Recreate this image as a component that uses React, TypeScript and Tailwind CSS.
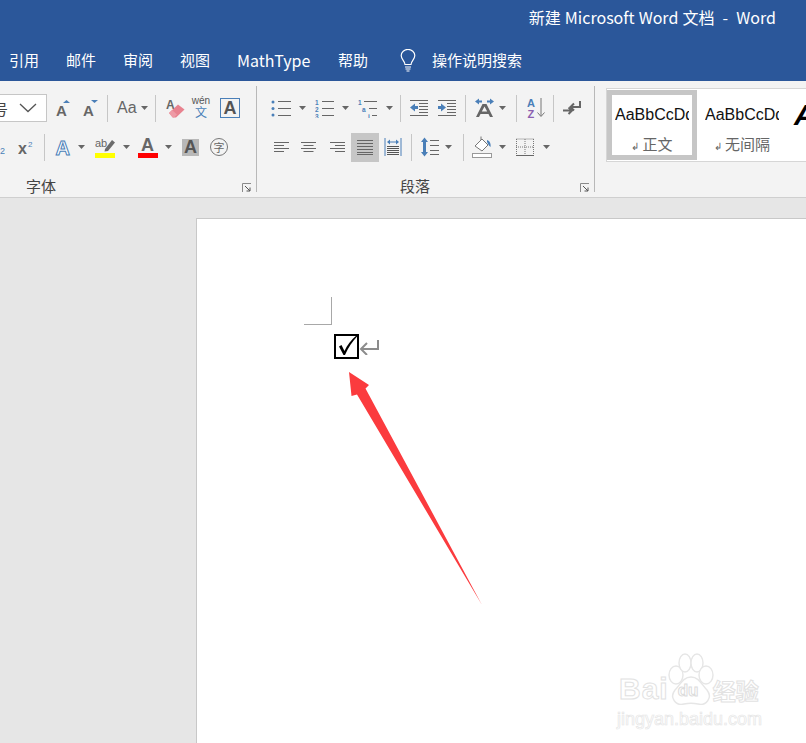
import React from "react";

const FONT = { fontFamily: '"Noto Sans CJK SC", "Liberation Sans", sans-serif' };
const LATIN = { fontFamily: '"Liberation Sans", sans-serif' };

const BLUE = "#4a7fb8";
const GRAY = "#666666";

function Dd({ className = "" }: { className?: string }) {
  return (
    <svg width="7" height="4" viewBox="0 0 7 4" className={`shrink-0 ${className}`}>
      <path d="M0 0H7L3.5 4Z" fill="#666" />
    </svg>
  );
}

function Sep({ className = "" }: { className?: string }) {
  return <div className={`w-px h-[27px] bg-[#c6c6c6] shrink-0 ${className}`} />;
}

function Ico({
  w,
  h = 20,
  className = "",
  children,
}: {
  w: number;
  h?: number;
  className?: string;
  children: React.ReactNode;
}) {
  return (
    <svg width={w} height={h} viewBox={`0 0 ${w} ${h}`} className={`shrink-0 ${className}`}>
      {children}
    </svg>
  );
}

function BigA({ x = 0, y = 17, size = 18, fill = GRAY, bold = true }: { x?: number; y?: number; size?: number; fill?: string; bold?: boolean }) {
  return (
    <text x={x} y={y} fontSize={size} fontWeight={bold ? 700 : 400} fill={fill} fontFamily="Liberation Sans">
      A
    </text>
  );
}

function Lines({ x, ys, w, color = GRAY }: { x: number; ys: number[]; w: number; color?: string }) {
  return (
    <>
      {ys.map((y) => (
        <rect key={y} x={x} y={y} width={w} height={1} fill={color} />
      ))}
    </>
  );
}

function Align({ mode, className = "" }: { mode: "l" | "c" | "r"; className?: string }) {
  const rows = [15, 10, 15, 10];
  return (
    <Ico w={15} h={12} className={className}>
      {rows.map((w, i) => (
        <rect
          key={i}
          x={mode === "l" ? 0 : mode === "c" ? (15 - w) / 2 : 15 - w}
          y={1 + i * 3}
          width={w}
          height={1}
          fill={GRAY}
        />
      ))}
    </Ico>
  );
}

function Launcher({ className = "" }: { className?: string }) {
  return (
    <svg width="9" height="9" viewBox="0 0 9 9" className={`shrink-0 ${className}`}>
      <path d="M0.5 9V0.5H9" stroke="#8a8a8a" fill="none" />
      <path d="M3 3L8 8M8 4.5V8H4.5" stroke="#555" fill="none" />
    </svg>
  );
}

function FontGroup() {
  return (
    <div className="w-[257px] shrink-0 border-r border-[#b8b8b8] h-[106px] mt-[5px] flex flex-col relative">
      <div className="h-[28px] mt-[8px] flex items-center">
        <div className="w-[47px] h-[28px] bg-white border border-[#c6c6c6] border-l-0 flex items-center overflow-hidden shrink-0">
          <span className="text-[15px] text-[#444] -ml-[7px] leading-none w-[25px]">号</span>
          <svg width="18" height="10" viewBox="0 0 18 10" className="ml-[1px]">
            <path d="M1 1L9 8.5L17 1" stroke="#555" strokeWidth="1.3" fill="none" />
          </svg>
        </div>
        <Ico w={18} className="ml-[7px]">
          <BigA x={2} y={18} size={15} />
          <path d="M9 5H16L12.5 2Z" fill={BLUE} />
        </Ico>
        <Ico w={18} className="ml-[8px]">
          <BigA x={3} y={18} size={15} />
          <path d="M11 2H18L14.5 5Z" fill={BLUE} />
        </Ico>
        <Sep className="ml-[9px]" />
        <span className="ml-[9px] text-[16px] text-[#666] leading-none w-[21px] overflow-visible" style={LATIN}>
          Aa
        </span>
        <Dd className="ml-[3px]" />
        <Sep className="ml-[7px]" />
        <Ico w={20} h={21} className="ml-[9px]">
          <text x="1" y="11" fontSize="12" fill={GRAY} fontFamily="Liberation Sans" fontWeight="700">A</text>
          <path d="M4 15L13 6.5L19.5 11.5L11 19.5H8Z" fill="#e8828f" />
          <path d="M4 15L7 12L12 16.5L9 19.5H7.5Z" fill="#ee9aa5" />
        </Ico>
        <div className="ml-[7px] w-[18px] h-[24px] flex flex-col items-center shrink-0 leading-none">
          <span className="text-[10px] text-[#555] leading-[11px] -mt-[1px]" style={LATIN}>wén</span>
          <span className="text-[12px] text-[#4a7fb8] leading-[12px]">文</span>
        </div>
        <div className="ml-[10px] w-[20px] h-[20px] border border-[#4a7fb8] flex items-center justify-center shrink-0">
          <span className="text-[18px] font-bold text-[#555] leading-none" style={LATIN}>A</span>
        </div>
      </div>
      <div className="h-[30px] mt-[10px] flex items-center">
        <span className="text-[9px] text-[#4a7fb8] w-[5px] mt-[9px] overflow-hidden leading-none" style={LATIN}>2</span>
        <Ico w={17} h={18} className="ml-[13px]">
          <text x="0" y="16" fontSize="16" fontWeight="700" fill={GRAY} fontFamily="Liberation Sans">x</text>
          <text x="10" y="9" fontSize="8" fill={BLUE} fontFamily="Liberation Sans">2</text>
        </Ico>
        <Sep className="ml-[9px]" />
        <Ico w={18} h={21} className="ml-[10px]">
          <text x="0.5" y="18" fontSize="20" fontWeight="700" fill="#fff" stroke={BLUE} strokeWidth="1" fontFamily="Liberation Sans">A</text>
        </Ico>
        <Dd className="ml-[5px]" />
        <div className="ml-[10px] w-[20px] h-[22px] flex flex-col shrink-0">
          <Ico w={20} h={17}>
            <text x="0" y="11" fontSize="11" fill={GRAY} fontFamily="Liberation Sans">ab</text>
            <path d="M10 13L17 4L20 6.5L13 15L9.5 15.5Z" fill="#6b6b6b" />
          </Ico>
          <div className="h-[5px] bg-[#ffff00]" />
        </div>
        <Dd className="ml-[8px]" />
        <div className="ml-[8px] w-[20px] h-[22px] flex flex-col items-center shrink-0">
          <Ico w={20} h={17}>
            <text x="3" y="15" fontSize="18" fontWeight="700" fill={GRAY} fontFamily="Liberation Sans">A</text>
          </Ico>
          <div className="h-[5px] w-full bg-[#ff0000]" />
        </div>
        <Dd className="ml-[7px]" />
        <div className="ml-[10px] w-[17px] h-[17px] bg-[#b8b8b8] flex items-center justify-center shrink-0">
          <span className="text-[18px] font-bold text-[#555] leading-none" style={LATIN}>A</span>
        </div>
        <div className="ml-[11px] w-[18px] h-[18px] rounded-full border border-[#777] flex items-center justify-center shrink-0">
          <span className="text-[11px] text-[#666] leading-none">字</span>
        </div>
      </div>
      <span className="absolute left-[26px] top-[92px] text-[15px] leading-[16px] text-[#444]">字体</span>
      <Launcher className="absolute left-[242px] top-[97px]" />
    </div>
  );
}

function ParaGroup() {
  return (
    <div className="w-[338px] shrink-0 border-r border-[#b8b8b8] h-[106px] mt-[5px] flex flex-col relative">
      <div className="h-[28px] mt-[8px] flex items-center pl-[14px]">
        <Ico w={20} h={20}>
          <circle cx="2" cy="4" r="1.5" fill={BLUE} />
          <circle cx="2" cy="10.5" r="1.5" fill={BLUE} />
          <circle cx="2" cy="17" r="1.5" fill={BLUE} />
          <Lines x={7} ys={[3, 10, 17]} w={13} />
        </Ico>
        <Dd className="ml-[8px]" />
        <Ico w={19} h={20} className="ml-[9px]">
          <text x="0" y="7" fontSize="6.5" fontWeight="700" fill={BLUE} fontFamily="Liberation Sans">1</text>
          <text x="0" y="14" fontSize="6.5" fontWeight="700" fill={BLUE} fontFamily="Liberation Sans">2</text>
          <text x="0" y="21" fontSize="6.5" fontWeight="700" fill={BLUE} fontFamily="Liberation Sans">3</text>
          <Lines x={7} ys={[3, 10, 17]} w={12} />
        </Ico>
        <Dd className="ml-[8px]" />
        <Ico w={19} h={20} className="ml-[9px]">
          <text x="0" y="7" fontSize="6.5" fontWeight="700" fill={BLUE} fontFamily="Liberation Sans">1</text>
          <text x="4" y="14" fontSize="6.5" fontWeight="700" fill={BLUE} fontFamily="Liberation Sans">a</text>
          <text x="10" y="21" fontSize="6.5" fontWeight="700" fill={BLUE} fontFamily="Liberation Sans">i</text>
          <Lines x={6} ys={[3]} w={13} />
          <Lines x={11} ys={[10]} w={8} />
          <Lines x={14} ys={[17]} w={5} />
        </Ico>
        <Dd className="ml-[9px]" />
        <Sep className="ml-[7px]" />
        <Ico w={18} h={18} className="ml-[9px]">
          <Lines x={0} ys={[1, 16]} w={18} />
          <Lines x={9} ys={[4, 7, 10, 13]} w={9} />
          <path d="M0 8.5L5 4.5V7H8V10H5V12.5Z" fill={BLUE} />
        </Ico>
        <Ico w={18} h={18} className="ml-[10px]">
          <Lines x={0} ys={[1, 16]} w={18} />
          <Lines x={9} ys={[4, 7, 10, 13]} w={9} />
          <path d="M8 8.5L3 4.5V7H0V10H3V12.5Z" fill={BLUE} />
        </Ico>
        <Sep className="ml-[9px]" />
        <Ico w={19} h={20} className="ml-[9px]">
          <path d="M0 3.5L4 0.5V2.5H7V4.5H4V6.5ZM19 3.5L15 0.5V2.5H12V4.5H15V6.5Z" fill={BLUE} />
          <path d="M1 19L7.5 6H11.5L18 19H15L13.5 16H5.5L4 19ZM6.8 13.5H12.2L9.5 8.5Z" fill={GRAY} />
        </Ico>
        <Dd className="ml-[5px]" />
        <Sep className="ml-[10px]" />
        <Ico w={18} h={22} className="ml-[10px]">
          <text x="0" y="10" fontSize="11" fontWeight="700" fill={BLUE} fontFamily="Liberation Sans">A</text>
          <text x="0.5" y="21" fontSize="11" fontWeight="700" fill="#8b5fb0" fontFamily="Liberation Sans">Z</text>
          <path d="M14 1V19M10.5 15.5L14 19.5L17.5 15.5" stroke="#777" fill="none" />
        </Ico>
        <Sep className="ml-[8px]" />
        <Ico w={18} h={16} className="ml-[9px]">
          <path d="M17 1V7H8M11 3.5L7.5 7L11 10.5" stroke={GRAY} strokeWidth="2" fill="none" />
          <path d="M0 10.5H8M5.5 7.5L9 10.5L5.5 14" stroke={GRAY} strokeWidth="2" fill="none" />
        </Ico>
      </div>
      <div className="h-[30px] mt-[10px] flex items-center pl-[17px]">
        <Align mode="l" />
        <Align mode="c" className="ml-[12px]" />
        <Align mode="r" className="ml-[14px]" />
        <div className="ml-[6px] w-[28px] h-[29px] bg-[#c6c6c6] flex items-center justify-center shrink-0">
          <Ico w={16} h={16}>
            <Lines x={0} ys={[1, 4, 7, 10, 13, 15]} w={16} />
          </Ico>
        </div>
        <Ico w={18} h={20} className="ml-[5px]">
          <Lines x={3} ys={[9, 11, 13, 15, 17]} w={12} color="#555" />
          <path d="M1 1V19M17 1V19" stroke={BLUE} />
          <path d="M3 5L6 2.5V4.5H12V2.5L15 5L12 7.5V5.5H6V7.5Z" fill={BLUE} />
        </Ico>
        <Sep className="ml-[9px]" />
        <Ico w={18} h={20} className="ml-[9px]">
          <path d="M3.5 0.5L7 5H5V15H7L3.5 19.5L0 15H2V5H0Z" fill={BLUE} />
          <Lines x={9} ys={[3, 8, 13, 17]} w={9} />
        </Ico>
        <Dd className="ml-[6px]" />
        <Sep className="ml-[11px]" />
        <Ico w={20} h={22} className="ml-[8px]">
          <path d="M3 10L10 3L16 9L10 15Z" fill="#fff" stroke="#777" />
          <path d="M9 4V0.5" stroke="#777" />
          <path d="M15 4C18 5 19 8 18.5 11C17 10 16 8 15 6Z" fill={BLUE} />
          <rect x="0.5" y="17.5" width="19" height="4" fill="#fff" stroke="#999" />
        </Ico>
        <Dd className="ml-[7px]" />
        <Ico w={18} h={18} className="ml-[10px]">
          <path d="M0.5 1H18M0.5 1V17M9 1V17M17.5 1V17M0 9H18" stroke="#777" strokeDasharray="1 1" fill="none" />
          <rect x="0" y="17" width="18" height="1" fill="#666" />
        </Ico>
        <Dd className="ml-[9px]" />
      </div>
      <span className="absolute left-[143px] top-[92px] text-[15px] leading-[16px] text-[#444]">段落</span>
      <Launcher className="absolute left-[323px] top-[97px]" />
    </div>
  );
}

function StyleTile({ label, selected }: { label: string; selected?: boolean }) {
  return (
    <div
      className={`w-[90px] h-[70px] mt-[1px] shrink-0 flex flex-col items-center border-[5px] ${
        selected ? "border-[#c6c6c6]" : "border-white"
      }`}
    >
      <div className="w-[74px] overflow-hidden whitespace-nowrap text-[16px] leading-[20px] mt-[10px] text-[#111]" style={LATIN}>
        AaBbCcDd
      </div>
      <div className="text-[15px] leading-[18px] mt-[10px] text-[#666]">
        <span className="text-[10px] mr-[3px]">↲</span>
        {label}
      </div>
    </div>
  );
}

function Styles() {
  return (
    <div className="flex-1 mt-[7px] ml-[11px] h-[74px] bg-white border border-[#d6d6d6] border-r-0 flex overflow-hidden">
      <StyleTile label="正文" selected />
      <StyleTile label="无间隔" />
      <span className="ml-[7px] mt-[8px] text-[30px] font-bold italic text-black leading-[36px]" style={LATIN}>
        A
      </span>
    </div>
  );
}

function Paw() {
  return (
    <svg width="46" height="60" viewBox="0 0 46 60" className="shrink-0">
      <g fill="#fff" stroke="#e6e6e6" strokeWidth="1.4">
        <ellipse cx="8" cy="22" rx="7" ry="9" />
        <ellipse cx="17" cy="10" rx="6" ry="9" />
        <ellipse cx="29" cy="10" rx="6" ry="9" />
        <ellipse cx="38" cy="22" rx="7" ry="9" />
        <path d="M23 24C31 24 34 32 39 37C45 45 38 53 30 51C25 50 21 50 16 51C8 53 1 45 7 37C12 32 15 24 23 24Z" />
      </g>
    </svg>
  );
}

function Watermark() {
  return (
    <div className="absolute left-[619px] top-[655px] flex flex-col text-transparent [-webkit-text-stroke:1px_#e2e2e2]">
      <div className="flex items-end h-[50px] leading-none">
        <span className="text-[30px] font-bold tracking-[1px] mb-[1px]" style={LATIN}>Bai</span>
        <div className="relative w-[46px] h-[52px] mx-[-1px] shrink-0">
          <Paw />
          <span className="absolute left-[10px] top-[29px] text-[17px] font-bold [-webkit-text-stroke:1px_#dcdcdc]" style={LATIN}>du</span>
        </div>
        <span className="text-[23px] font-bold mb-[3px]">经验</span>
      </div>
      <span className="text-[18px] leading-[18px] mt-[5px] ml-[-2px] whitespace-nowrap [-webkit-text-stroke:0.7px_#e6e6e6]" style={LATIN}>
        jingyan.baidu.com
      </span>
    </div>
  );
}

export default function App() {
  return (
    <div className="w-[806px] h-[743px] relative overflow-hidden flex flex-col bg-[#e6e6e6]" style={FONT}>
      <div className="h-[81px] bg-[#2b579a] text-white flex flex-col shrink-0">
        <div className="h-[33px] flex items-center justify-end pr-[30px] text-[16px] whitespace-pre [word-spacing:0.5px]">
          新建 Microsoft Word 文档  -  Word
        </div>
        <div className="h-[48px] flex items-center text-[15px] pt-[6px]">
          <span className="ml-[9px]">引用</span>
          <span className="ml-[27px]">邮件</span>
          <span className="ml-[27px]">审阅</span>
          <span className="ml-[27px]">视图</span>
          <span className="ml-[27px] w-[74px] text-[16px] whitespace-nowrap">MathType</span>
          <span className="ml-[27px]">帮助</span>
          <svg width="16" height="23" viewBox="0 0 16 23" className="ml-[32px]">
            <path d="M5 15.5C5 12 1.2 10.5 1.2 6.6A6.8 6.2 0 0 1 14.8 6.6C14.8 10.5 11 12 11 15.5Z" fill="none" stroke="#fff" strokeWidth="1.2" />
            <path d="M5 18H11M5.5 20H10.5M6.5 22H9.5" stroke="#fff" strokeWidth="1.2" />
          </svg>
          <span className="ml-[16px]">操作说明搜索</span>
        </div>
      </div>

      <div className="h-[117px] shrink-0 bg-[#f3f3f3] border-b border-[#cfcfcf] flex">
        <FontGroup />
        <ParaGroup />
        <Styles />
      </div>

      <div className="flex-1 pl-[196px] pt-[20px] min-h-0">
        <div className="h-full bg-white border-l border-t border-[#c8c8c8] pl-[107px] pt-[78px]">
          <div className="w-[28px] h-[28px] border-r border-b border-[#a8a8a8]" />
          <div className="flex items-center ml-[30px] mt-[9px]">
            <svg width="25" height="25" viewBox="0 0 25 25" className="shrink-0">
              <rect x="1" y="1" width="23" height="23" fill="none" stroke="#000" strokeWidth="2" />
              <path d="M5 12.5L7.5 11L10.5 17C13 11 17 6 23 1L23.5 2C18.5 7.5 14 13.5 11 21H9.5Z" fill="#000" />
            </svg>
            <svg width="20" height="16" viewBox="0 0 20 16" className="shrink-0">
              <path d="M19 1V10H2M8 4L2 10L8 16" stroke="#8c8c8c" strokeWidth="2" fill="none" />
            </svg>
          </div>
        </div>
      </div>

      <svg width="806" height="743" viewBox="0 0 806 743" className="absolute left-0 top-0 pointer-events-none">
        <path d="M349 372L369 385L365.5 388.5L482 605L357 394.5L351.5 396Z" fill="#fb3b3e" />
      </svg>
      <Watermark />
    </div>
  );
}
